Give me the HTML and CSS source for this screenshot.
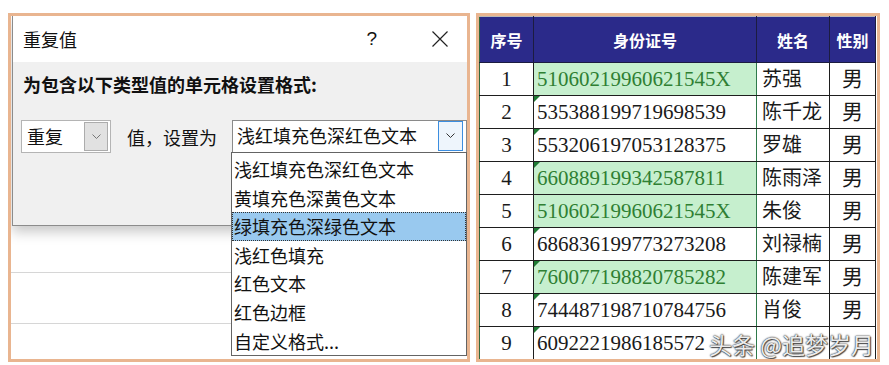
FILE: index.html
```html
<!DOCTYPE html>
<html lang="zh-CN">
<head>
    <meta charset="UTF-8">
    <meta name="viewport" content="width=device-width, initial-scale=1.0">
    <title>重复值</title>
    <link rel="stylesheet" href="styles.css">
</head>
<body>
    <div class="wrap">
        <section class="panel dlg-panel">
            <div class="dialog">
                <div class="dlg-title">
                    <span>重复值</span>
                    <span class="help">?</span>
                    <svg class="close" width="16" height="16" viewBox="0 0 16 16">
                        <path d="M0.5 0.5 L15.5 15.5 M15.5 0.5 L0.5 15.5" stroke="#222" stroke-width="1.2" fill="none"/>
                    </svg>
                </div>
                <div class="dlg-body">
                    <p class="dlg-label">为包含以下类型值的单元格设置格式:</p>
                    <div class="dlg-row">
                        <div class="combo combo-small">
                            <span class="combo-text">重复</span>
                            <span class="combo-btn">
                                <svg width="9" height="6" viewBox="0 0 9 6"><path d="M0.5 0.5 L4.5 4.5 L8.5 0.5" stroke="#777" fill="none"/></svg>
                            </span>
                        </div>
                        <span class="dlg-text">值，设置为</span>
                        <div class="combo combo-wide">
                            <span class="combo-text">浅红填充色深红色文本</span>
                            <span class="combo-btn active">
                                <svg width="9" height="6" viewBox="0 0 9 6"><path d="M0.5 0.5 L4.5 4.5 L8.5 0.5" stroke="#333" fill="none"/></svg>
                            </span>
                        </div>
                    </div>
                </div>
            </div>
            <div class="sheet">
                <div class="sheet-row first"></div>
                <div class="sheet-row"></div>
            </div>
            <ul class="dropdown">
                <li>浅红填充色深红色文本</li>
                <li>黄填充色深黄色文本</li>
                <li class="selected">绿填充色深绿色文本</li>
                <li>浅红色填充</li>
                <li>红色文本</li>
                <li>红色边框</li>
                <li>自定义格式...</li>
            </ul>
        </section>

        <section class="panel table-panel">
            <table class="grid">
                <colgroup>
                    <col class="c-no">
                    <col class="c-id">
                    <col class="c-name">
                    <col class="c-sex">
                </colgroup>
                <thead>
                    <tr><th>序号</th><th>身份证号</th><th>姓名</th><th>性别</th></tr>
                </thead>
                <tbody>
                    <tr><td>1</td><td class="id dup">51060219960621545X</td><td class="name">苏强</td><td>男</td></tr>
                    <tr><td>2</td><td class="id mark">535388199719698539</td><td class="name">陈千龙</td><td>男</td></tr>
                    <tr><td>3</td><td class="id mark">553206197053128375</td><td class="name">罗雄</td><td>男</td></tr>
                    <tr><td>4</td><td class="id dup mark">660889199342587811</td><td class="name">陈雨泽</td><td>男</td></tr>
                    <tr><td>5</td><td class="id dup">51060219960621545X</td><td class="name">朱俊</td><td>男</td></tr>
                    <tr><td>6</td><td class="id mark">686836199773273208</td><td class="name">刘禄楠</td><td>男</td></tr>
                    <tr><td>7</td><td class="id dup mark">760077198820785282</td><td class="name">陈建军</td><td>男</td></tr>
                    <tr><td>8</td><td class="id mark">744487198710784756</td><td class="name">肖俊</td><td>男</td></tr>
                    <tr><td>9</td><td class="id mark cut">6092221986185572</td><td class="name"></td><td></td></tr>
                </tbody>
            </table>
            <div class="watermark">头条 @追梦岁月</div>
        </section>
    </div>
</body>
</html>
```

FILE: styles.css
```css
body {
    margin: 0;
    background: #fff;
    font-family: "Noto Sans CJK SC", "Liberation Sans", sans-serif;
    color: #111;
}
.wrap {
    display: flex;
    gap: 6px;
    padding: 13px 0 0 8px;
}
.panel {
    position: relative;
    height: 343px;
    border: 3px solid #e9b590;
    background: #fff;
    overflow: hidden;
}
.dlg-panel {
    width: 456px;
}
.table-panel {
    width: 398px;
}

/* dialog */
.dialog {
    position: relative;
    z-index: 1;
    height: 210px;
    margin-left: 1px;
    border-left: 1px solid #8c8c8c;
    border-bottom: 1px solid #8c8c8c;
    box-sizing: border-box;
    display: flex;
    flex-direction: column;
    box-shadow: 0 6px 12px rgba(0, 0, 0, 0.22);
}
.dlg-title {
    height: 46px;
    background: #fff;
    display: flex;
    align-items: center;
    padding-left: 10px;
    font-size: 18px;
    line-height: 24px;
}
.help {
    margin-left: auto;
    margin-right: 55px;
    font-family: "Liberation Sans", sans-serif;
    font-size: 19px;
}
.close {
    margin-right: 19px;
}
.dlg-body {
    flex: 1;
    background: #f0f0f0;
    padding: 10px 0 0 8px;
}
.dlg-label {
    margin: 0 0 24px 2px;
    font-size: 18px;
    line-height: 24px;
    font-weight: bold;
}
.dlg-row {
    display: flex;
    align-items: center;
    height: 33px;
    font-size: 18px;
}
.combo {
    height: 33px;
    box-sizing: border-box;
    display: flex;
    align-items: stretch;
    background: #fff;
    padding: 1px;
}
.combo-text {
    flex: 1;
    padding-left: 4px;
    line-height: 29px;
}
.combo-small {
    width: 90px;
    border: 1px solid #b4b4b4;
}
.combo-wide {
    flex: 1;
    margin-left: 15px;
    border: 1px solid #8a8a8a;
    padding: 0 2px 1px 0;
}
.combo-btn {
    width: 24px;
    box-sizing: border-box;
    border: 1px solid #acacac;
    background: #e1e1e1;
    display: flex;
    align-items: center;
    justify-content: center;
    margin-right: 1px;
}
.combo-btn.active {
    width: 25px;
    border-color: #3c8ee0;
    background: #eef5fc;
}
.dlg-text {
    margin-left: 16px;
}

/* worksheet lines behind the dialog */
.sheet-row {
    height: 50px;
    border-bottom: 1px solid #d6d6d6;
}
.sheet-row.first {
    height: 46px;
}

/* open list of the second combo */
.dropdown {
    position: absolute;
    left: 220px;
    top: 136px;
    width: 236px;
    box-sizing: border-box;
    margin: 0;
    padding: 2px 0 0;
    list-style: none;
    background: #fff;
    border: 1px solid #646464;
    z-index: 2;
    font-size: 18px;
}
.dropdown li {
    height: 28.6px;
    line-height: 28.6px;
    padding-left: 2px;
}
.dropdown li.selected {
    background: #99c9ef;
    outline: 1px dotted #333;
    outline-offset: -1px;
}

/* table */
.grid {
    table-layout: fixed;
    border-collapse: collapse;
    width: 396px;
    font-family: "Liberation Serif", "Noto Sans CJK SC", serif;
    font-size: 21px;
    color: #1a1a1a;
}
.c-no { width: 54px; }
.c-id { width: 223px; }
.c-name { width: 73px; }
.c-sex { width: 46px; }
.grid th {
    height: 45px;
    padding: 0;
    background: #2b2a8a;
    color: #fff;
    font-family: "Noto Sans CJK SC", sans-serif;
    font-size: 16px;
    font-weight: bold;
    border: 1px solid #1c1c40;
    border-top: 1px solid #b9b9b9;
}
.grid td {
    position: relative;
    height: 32px;
    padding: 0;
    border: 1px solid #1e1e1e;
    text-align: center;
    line-height: 32px;
    white-space: nowrap;
    overflow: hidden;
}
.grid td:first-child,
.grid th:first-child {
    border-left: 1px solid #2f6b3f;
}
.grid td.id {
    text-align: left;
    padding-left: 3px;
    border-right: 1px solid #2e7a4a;
}
.grid td.name {
    text-align: left;
    padding-left: 5px;
    font-size: 20px;
}
.grid td.dup {
    background: #c6efce;
    color: #2f7f33;
}
.grid td.mark::before {
    content: "";
    position: absolute;
    left: 0;
    top: 0;
    border-top: 6px solid #1f7a34;
    border-right: 6px solid transparent;
}

.watermark {
    position: absolute;
    right: 3px;
    bottom: 1px;
    z-index: 3;
    font-family: "Noto Sans CJK SC", sans-serif;
    font-size: 23px;
    line-height: 28px;
    color: rgba(255, 255, 255, 0.92);
    text-shadow: 0 0 1px #333, 0 0 2px #333, 1px 1px 1px #555;
}
```
